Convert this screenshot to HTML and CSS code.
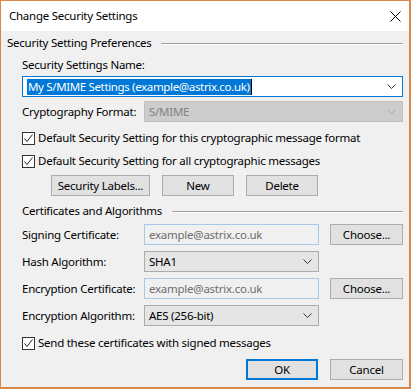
FILE: index.html
```html
<!DOCTYPE html>
<html lang="en">
<head>
    <meta charset="UTF-8">
    <title>Change Security Settings</title>
    <link rel="stylesheet" href="styles.css">
</head>
<body>

<div class="dialog">
    <div class="titlebar">
        <span class="title">Change Security Settings</span>
        <svg class="close" width="11" height="11" viewBox="0 0 11 11"><path d="M0.5 0.5L10.5 10.5M10.5 0.5L0.5 10.5" stroke="#000" stroke-width="1" fill="none"/></svg>
    </div>

    <div class="content">
        <div class="group-title"><span>Security Setting Preferences</span></div>

        <div class="group">
            <div class="field-label">Security Settings Name:</div>
            <div class="combo combo-focus">
                <span class="selected">My S/MIME Settings (example@astrix.co.uk)</span><span class="caret"></span>
                <svg class="chevron" width="9" height="5" viewBox="0 0 9 5"><path d="M0.5 0.5L4.5 4.5L8.5 0.5" stroke="#333" fill="none"/></svg>
            </div>

            <div class="form-row">
                <span class="row-label">Cryptography Format:</span>
                <div class="combo combo-disabled wide">
                    <span>S/MIME</span>
                    <svg class="chevron" width="9" height="5" viewBox="0 0 9 5"><path d="M0.5 0.5L4.5 4.5L8.5 0.5" stroke="#a8a8a8" fill="none"/></svg>
                </div>
            </div>

            <div class="check first-check">
                <span class="box"><svg width="11" height="11" viewBox="0 0 11 11"><path d="M1.5 5.5L4 8.5L9.5 1.5" stroke="#222" fill="none"/></svg></span>
                <span>Default Security Setting for this cryptographic message format</span>
            </div>
            <div class="check">
                <span class="box"><svg width="11" height="11" viewBox="0 0 11 11"><path d="M1.5 5.5L4 8.5L9.5 1.5" stroke="#222" fill="none"/></svg></span>
                <span>Default Security Setting for all cryptographic messages</span>
            </div>

            <div class="button-row">
                <button class="btn btn-labels">Security Labels...</button>
                <button class="btn btn-small">New</button>
                <button class="btn btn-small">Delete</button>
            </div>
        </div>

        <div class="group-title sub-title"><span>Certificates and Algorithms</span></div>

        <div class="group cert-grid">
            <span class="row-label">Signing Certificate:</span>
            <div class="textbox">example@astrix.co.uk</div>
            <button class="btn">Choose...</button>

            <span class="row-label">Hash Algorithm:</span>
            <div class="combo combo-plain">
                <span>SHA1</span>
                <svg class="chevron" width="9" height="5" viewBox="0 0 9 5"><path d="M0.5 0.5L4.5 4.5L8.5 0.5" stroke="#333" fill="none"/></svg>
            </div>
            <span></span>

            <span class="row-label">Encryption Certificate:</span>
            <div class="textbox">example@astrix.co.uk</div>
            <button class="btn">Choose...</button>

            <span class="row-label">Encryption Algorithm:</span>
            <div class="combo combo-plain">
                <span>AES (256-bit)</span>
                <svg class="chevron" width="9" height="5" viewBox="0 0 9 5"><path d="M0.5 0.5L4.5 4.5L8.5 0.5" stroke="#333" fill="none"/></svg>
            </div>
            <span></span>
        </div>

        <div class="check send-check">
            <span class="box"><svg width="11" height="11" viewBox="0 0 11 11"><path d="M1.5 5.5L4 8.5L9.5 1.5" stroke="#222" fill="none"/></svg></span>
            <span>Send these certificates with signed messages</span>
        </div>

        <div class="footer">
            <button class="btn btn-default">OK</button>
            <button class="btn">Cancel</button>
        </div>
    </div>
</div>

</body>
</html>
```

FILE: styles.css
```css
* {
    box-sizing: border-box;
}
body {
    margin: 0;
    font-family: 'Noto Sans', sans-serif;
    font-size: 11.5px;
    letter-spacing: -0.25px;
    color: #000;
    background: #fff;
}
.dialog {
    width: 411px;
    height: 389px;
    border: 1px solid #da8646;
    border-right-width: 2px;
    border-bottom-width: 2px;
    background: #f0f0f0;
    display: flex;
    flex-direction: column;
}
.titlebar {
    height: 30px;
    flex-shrink: 0;
    background: #fff;
    display: flex;
    align-items: center;
    justify-content: space-between;
    padding: 0 8px 0 8px;
}
.title {
    line-height: 16px;
}
.close {
    display: block;
}
.content {
    padding: 4px 6px 0 6px;
    display: flex;
    flex-direction: column;
}
.group-title {
    display: flex;
    align-items: center;
    line-height: 16px;
    height: 16px;
}
.group-title::after {
    content: "";
    flex: 1;
    height: 1px;
    background: #a0a0a0;
    box-shadow: 0 1px 0 #fff;
    margin: 0 0 0 10px;
}
.sub-title {
    margin-top: 7px;
    padding-left: 15px;
}
.group {
    padding-left: 15px;
}
.field-label {
    line-height: 16px;
    margin-top: 6px;
}
.combo {
    height: 21px;
    border: 1px solid #adadad;
    display: flex;
    align-items: center;
    padding-left: 4px;
    white-space: nowrap;
}
.combo .chevron {
    margin-left: auto;
    margin-right: 6px;
}
.combo-focus {
    margin-top: 3px;
    background: #fff;
    border-color: #0078d7;
}
.selected {
    background: #0078d7;
    color: #fff;
    line-height: 16px;
    padding: 0 1px;
    letter-spacing: -0.35px;
}
.caret {
    width: 1px;
    height: 16px;
    background: #000;
}
.form-row {
    display: flex;
    align-items: center;
    margin-top: 4px;
}
.row-label {
    width: 122px;
    flex-shrink: 0;
    white-space: nowrap;
}
.combo-disabled {
    background: #cccccc;
    border-color: #bfbfbf;
    color: #838383;
}
.wide {
    flex: 1;
}
.combo-plain {
    background: #e5e5e5;
    border-color: #acacac;
}
.check {
    display: flex;
    align-items: center;
    line-height: 16px;
    margin-top: 7px;
    white-space: nowrap;
}
.first-check {
    margin-top: 8px;
}
.box {
    width: 13px;
    height: 13px;
    border: 1px solid #333;
    background: #fff;
    margin-right: 3px;
    display: flex;
}
.btn {
    height: 21px;
    background: #e1e1e1;
    border: 1px solid #adadad;
    font-family: inherit;
    font-size: inherit;
    letter-spacing: inherit;
    color: #000;
    padding: 0;
    border-radius: 0;
}
.button-row {
    display: flex;
    gap: 12px;
    margin-top: 6px;
    padding-left: 29px;
}
.btn-labels {
    width: 99px;
}
.btn-small {
    width: 72px;
}
.cert-grid {
    display: grid;
    grid-template-columns: 111px 175px 73px;
    column-gap: 11px;
    row-gap: 6px;
    grid-auto-rows: 21px;
    align-items: center;
    margin-top: 5px;
}
.cert-grid .row-label {
    width: auto;
}
.cert-grid .combo,
.cert-grid .textbox,
.cert-grid .btn {
    height: 21px;
}
.textbox {
    height: 21px;
    border: 1px solid #a9c9e9;
    color: #6d6d6d;
    padding-left: 4px;
    display: flex;
    align-items: center;
}
.send-check {
    margin-top: 9px;
    padding-left: 15px;
}
.footer {
    display: flex;
    justify-content: flex-end;
    gap: 12px;
    margin-top: 8px;
}
.footer .btn {
    width: 73px;
}
.footer .btn-default {
    width: 72px;
    border: 2px solid #0078d7;
}
```
